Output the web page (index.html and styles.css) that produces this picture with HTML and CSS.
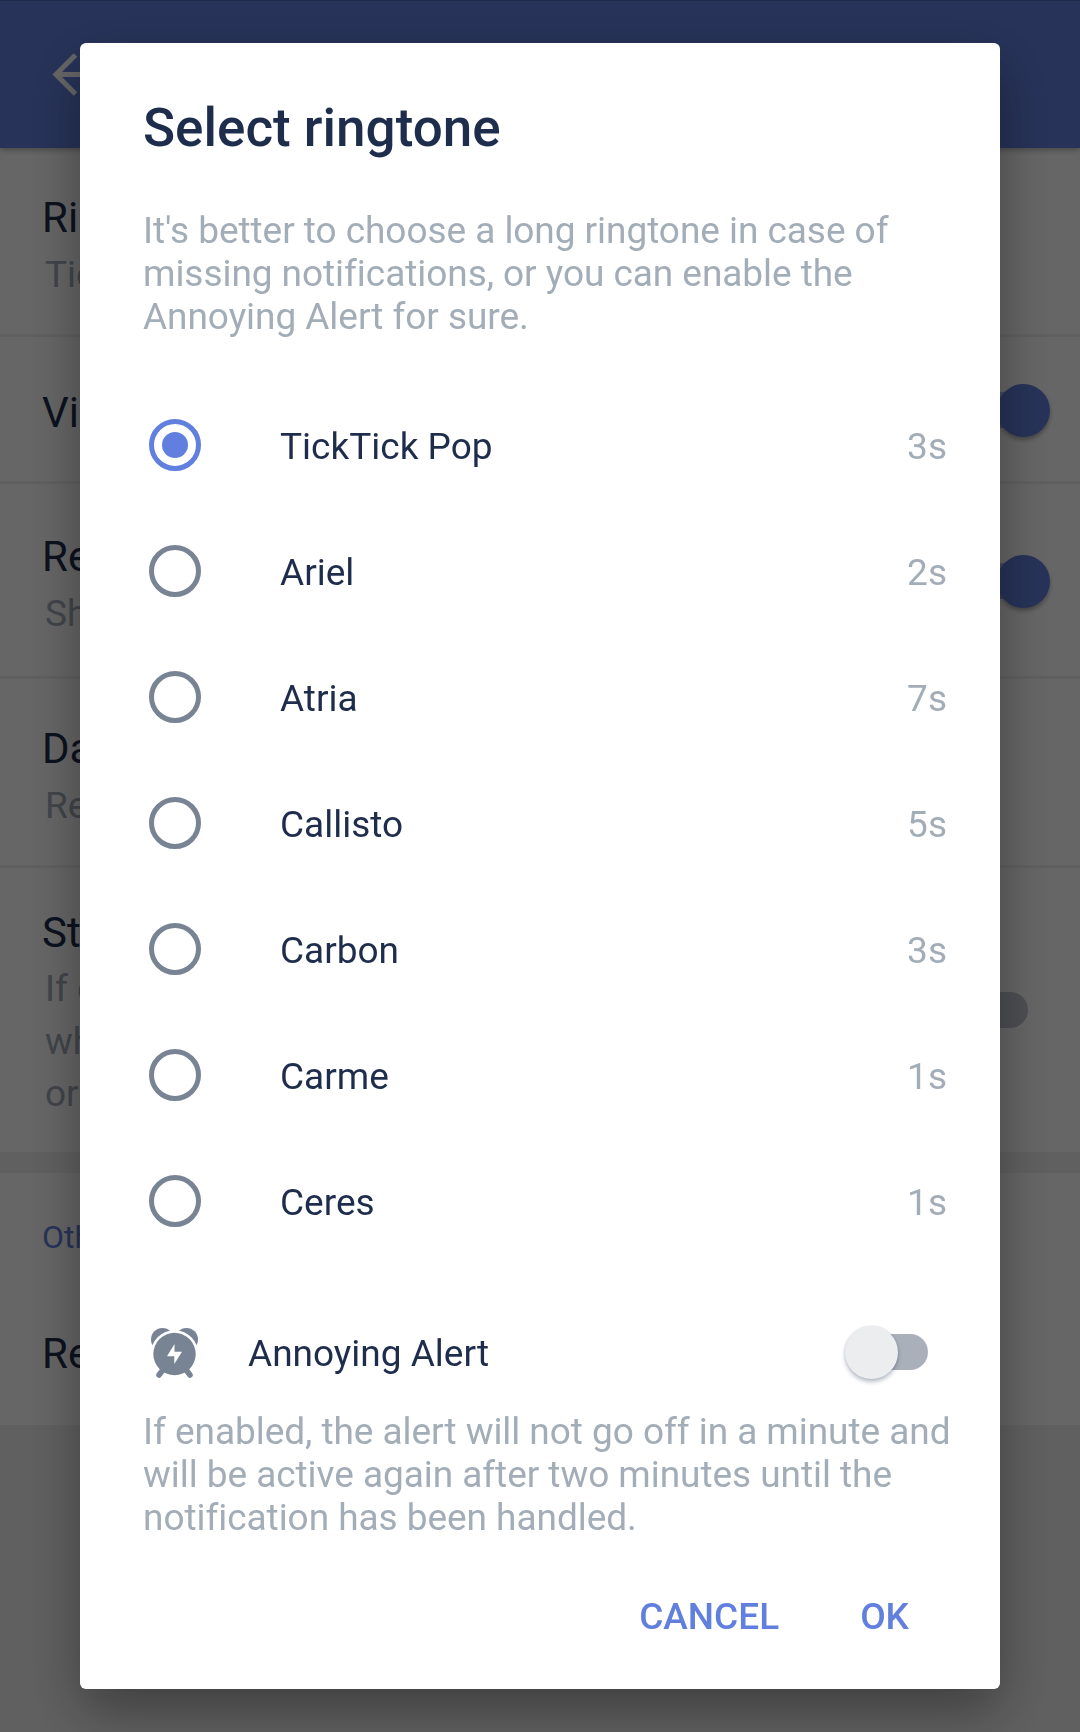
FILE: index.html
```html
<!DOCTYPE html>
<html lang="en">
<head>
<meta charset="utf-8">
<title>Select ringtone</title>
<link rel="stylesheet" href="styles.css">
</head>
<body>
<div class="settings">
  <header class="bar">
    <svg class="back" width="48" height="48" viewBox="0 0 48 48"><path d="M25.500 4 6 23.500 25.500 43M6 23.500H46" fill="none" stroke="#fff" stroke-width="5"/></svg>
  </header>
  <main class="rows">
    <div class="row ringtone"><div><div class="name">Ri</div><div class="sub">Tic</div></div></div>
    <div class="row vibrate"><div class="name">Vi</div><span class="switch on"></span></div>
    <div class="row resident"><div><div class="name">Re</div><div class="sub">Sh</div></div><span class="switch on"></span></div>
    <div class="row daily"><div><div class="name">Da</div><div class="sub">Re</div></div></div>
    <div class="row status"><div><div class="name">St</div><div class="sub">If e<br>wh<br>or</div></div><span class="switch off"></span></div>
    <div class="band"></div>
    <section class="others"><div class="group">Oth</div><div class="name">Re</div></section>
  </main>
</div>
<div class="scrim">
  <div class="dialog" role="dialog">
    <h1 class="title">Select ringtone</h1>
    <p class="text">It's better to choose a long ringtone in case of<br>missing notifications, or you can enable the<br>Annoying Alert for sure.</p>
    <ul class="list">
      <li class="item"><span class="radio checked"></span><span class="label">TickTick Pop</span><span class="time">3s</span></li>
      <li class="item"><span class="radio"></span><span class="label">Ariel</span><span class="time">2s</span></li>
      <li class="item"><span class="radio"></span><span class="label">Atria</span><span class="time">7s</span></li>
      <li class="item"><span class="radio"></span><span class="label">Callisto</span><span class="time">5s</span></li>
      <li class="item"><span class="radio"></span><span class="label">Carbon</span><span class="time">3s</span></li>
      <li class="item"><span class="radio"></span><span class="label">Carme</span><span class="time">1s</span></li>
      <li class="item"><span class="radio"></span><span class="label">Ceres</span><span class="time">1s</span></li>
    </ul>
    <div class="alert">
      <svg class="clock" width="50" height="52" viewBox="0 0 50 52">
        <g fill="#788494">
          <circle cx="12.500" cy="13.500" r="11.500"/><circle cx="36.500" cy="13.500" r="11.500"/>
        </g>
        <circle cx="24.500" cy="28" r="23.800" fill="#fff"/>
        <path d="M13.500 43 9 49M35.500 43l4.500 6" stroke="#788494" stroke-width="5.500" stroke-linecap="round"/>
        <circle cx="24.500" cy="28" r="21.200" fill="#788494"/>
        <path d="M24.500 18 17 30.200h7.300v7.800L32 25.800H24.500z" fill="#fff"/>
      </svg>
      <span class="label">Annoying Alert</span>
      <span class="toggle"></span>
    </div>
    <p class="text note">If enabled, the alert will not go off in a minute and<br>will be active again after two minutes until the<br>notification has been handled.</p>
    <div class="actions"><button class="action">CANCEL</button><button class="action">OK</button></div>
  </div>
</div>
</body>
</html>
```
FILE: styles.css
```css
* { box-sizing: border-box; }
body { margin: 0; font-family: Roboto, sans-serif; font-size: 37px; background: #f0f0f0; color: #1f2d4d; }

.settings { height: 1732px; overflow: hidden; display: flex; flex-direction: column; }
.bar { height: 148px; flex: none; display: flex; align-items: center; padding-left: 50px; background: #617fde; border-top: 1px solid #4a68b4; box-shadow: 0 2px 6px rgba(0,0,0,.3); z-index: 1; }
.back { display: block; }
.rows { background: #fff; }
.row { display: flex; justify-content: space-between; border-bottom: 3px solid #f0f0f0; padding-left: 42px; }
.name { font-size: 42px; line-height: 50px; }
.sub { margin: 5px 0 0 3px; line-height: 53px; color: #a3adb8; }
.ringtone { height: 189px; padding-top: 45px; }
.vibrate { height: 147px; padding-top: 51px; }
.resident { height: 195px; padding-top: 48px; }
.daily { height: 189px; padding-top: 45px; }
.status { height: 284px; padding-top: 40px; border-bottom: 0; }
.status .sub { line-height: 52.600px; }
.band { height: 21px; background: #f0f0f0; }
.others { height: 252px; padding: 44px 0 0 42px; }
.group { font-size: 32px; line-height: 40px; margin-bottom: 72px; color: #617fde; }
.switch { display: flex; align-items: center; width: 83px; height: 36px; border-radius: 18px; }
.switch.on { margin: 4px 35px 0 0; justify-content: flex-end; background: #b0bff0; }
.resident .switch { margin-top: 31px; }
.switch.on::after { content: ""; width: 53px; height: 53px; margin-right: -5px; flex: none; border-radius: 50%; background: #617fde; box-shadow: 0 3px 4px rgba(0,0,0,.3); }
.switch.off { margin: 84px 52px 0 0; background: #c1c6ce; }

.scrim { position: fixed; inset: 0; z-index: 2; display: flex; justify-content: center; align-items: flex-start; padding-top: 43px; background: rgba(0,0,0,.6); }
.dialog { width: 920px; height: 1646px; padding: 55px 53px 0 63px; border-radius: 6px; background: #fff; box-shadow: 0 22px 54px rgba(0,0,0,.36); }
.title { margin: 0; font-size: 53px; line-height: 60px; font-weight: 500; }
.text { margin: 51px 0 0; line-height: 43px; letter-spacing: -.05px; color: #a3adb8; white-space: nowrap; }
.list { list-style: none; margin: 44px 0 0; padding: 0 0 0 6px; }
.item { display: flex; align-items: center; height: 126px; }
.radio { display: flex; align-items: center; justify-content: center; width: 52px; height: 52px; margin-right: 79px; border: 5px solid #788494; border-radius: 50%; }
.checked { border-color: #617fde; }
.checked::after { content: ""; width: 26px; height: 26px; border-radius: 50%; background: #617fde; }
.label, .time { padding-top: 3px; }
.time { margin-left: auto; color: #a3adb8; }
.alert { display: flex; align-items: center; height: 70px; margin-top: 53px; padding: 0 19px 0 7px; }
.clock { margin-right: 48px; }
.toggle { display: flex; align-items: center; width: 72px; height: 36px; margin-left: auto; border-radius: 18px; background: #a9b0ba; }
.toggle::before { content: ""; flex: none; width: 53px; height: 53px; margin-left: -11px; border-radius: 50%; background: #ecedef; box-shadow: 0 3px 4px rgba(31,45,77,.3), 0 0 2px rgba(31,45,77,.15); }
.note { margin-top: 23px; }
.actions { display: flex; justify-content: flex-end; gap: 81px; height: 60px; margin: 48px 38px 0 0; }
.action { padding: 0; border: 0; background: none; font: 500 37px/60px Roboto, sans-serif; color: #617fde; }
```
